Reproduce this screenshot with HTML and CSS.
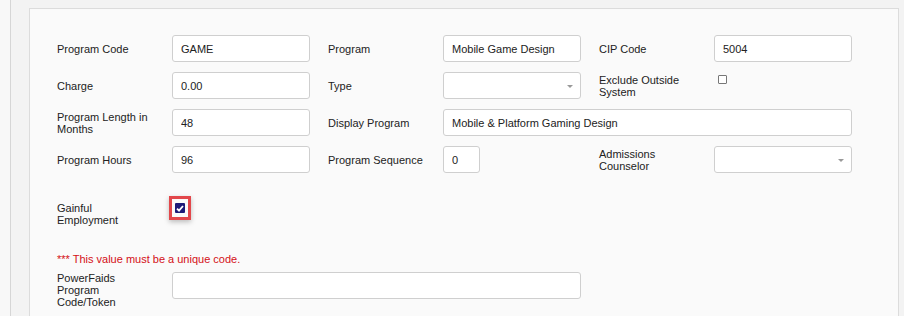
FILE: index.html
```html
<!DOCTYPE html>
<html lang="en">
<head>
    <meta charset="UTF-8">
    <meta name="viewport" content="width=device-width, initial-scale=1.0">
    <title>Program</title>
    <link rel="stylesheet" href="styles.css">
</head>
<body>
    <div class="wrap">
        <div class="panel">
            <div class="form-grid">
                <div class="field">
                    <label for="code">Program Code</label>
                    <input id="code" type="text" value="GAME">
                </div>
                <div class="field">
                    <label for="program">Program</label>
                    <input id="program" type="text" value="Mobile Game Design">
                </div>
                <div class="field">
                    <label for="cip">CIP Code</label>
                    <input id="cip" type="text" value="5004">
                </div>

                <div class="field">
                    <label for="charge">Charge</label>
                    <input id="charge" type="text" value="0.00">
                </div>
                <div class="field">
                    <label for="type">Type</label>
                    <div class="select" id="type"><span class="caret"></span></div>
                </div>
                <div class="field">
                    <label for="exclude">Exclude Outside System</label>
                    <input id="exclude" class="check" type="checkbox">
                </div>

                <div class="field">
                    <label for="length">Program Length in Months</label>
                    <input id="length" type="text" value="48">
                </div>
                <div class="field span-2">
                    <label for="display">Display Program</label>
                    <input id="display" type="text" value="Mobile &amp; Platform Gaming Design">
                </div>

                <div class="field">
                    <label for="hours">Program Hours</label>
                    <input id="hours" type="text" value="96">
                </div>
                <div class="field">
                    <label for="sequence">Program Sequence</label>
                    <input id="sequence" class="short" type="text" value="0">
                </div>
                <div class="field">
                    <label for="counselor">Admissions Counselor</label>
                    <div class="select" id="counselor"><span class="caret"></span></div>
                </div>
            </div>

            <div class="gainful">
                <label>Gainful Employment</label>
                <span class="highlight">
                    <span class="checked">
                        <svg width="8" height="7" viewBox="0 0 8 7"><path d="M1 3.6 L3 5.6 L7 1" fill="none" stroke="#fff" stroke-width="1.8"/></svg>
                    </span>
                </span>
            </div>

            <p class="warning">*** This value must be a unique code.</p>

            <div class="field wide">
                <label for="token">PowerFaids Program Code/Token</label>
                <input id="token" type="text" value="">
            </div>
        </div>
    </div>
</body>
</html>
```

FILE: styles.css
```css
body {
    margin: 0;
    background-color: #f8f8f8;
    font-family: "Liberation Sans", Arial, sans-serif;
    font-size: 11px;
    color: #222;
}
.wrap {
    margin-left: 10px;
    width: 870px;
    padding: 8px 18px 0 18px;
    background-color: #f3f3f3;
    border-left: 1px solid #d6d6d6;
    border-right: 1px solid #d6d6d6;
}
.panel {
    background-color: #fafafa;
    border: 1px solid #dcdcdc;
    padding: 26px 27px 40px 27px;
    height: 320px;
}
.form-grid {
    display: grid;
    grid-template-columns: repeat(3, 253px);
    column-gap: 18px;
    row-gap: 10px;
}
.field {
    display: flex;
    align-items: center;
    min-height: 27px;
}
.field label {
    width: 97px;
    margin-right: 18px;
    padding-top: 1px;
    flex-shrink: 0;
}
.field.span-2 {
    grid-column: span 2;
}
input[type="text"], .select {
    flex: 1;
    min-width: 0;
    width: 0;
    box-sizing: border-box;
    height: 27px;
    margin: 0;
    padding: 0 8px;
    border: 1px solid #cfcfcf;
    border-radius: 3px;
    background: #fff;
    font-family: inherit;
    font-size: 11px;
    color: #222;
}
input.short {
    flex: none;
    width: 37px;
}
.select {
    position: relative;
}
.caret {
    position: absolute;
    right: 7px;
    top: 12px;
    border-style: solid;
    border-width: 3px 3px 0 3px;
    border-color: #999 transparent transparent transparent;
}
.check {
    appearance: none;
    align-self: flex-start;
    width: 9px;
    height: 9px;
    margin: 3px 0 0 4px;
    border: 1px solid #777;
    border-radius: 1px;
    background: #fff;
}
.gainful {
    display: flex;
    align-items: flex-start;
    margin-top: 23px;
}
.gainful label {
    width: 97px;
    margin: 6px 15px 0 0;
}
.highlight {
    display: inline-block;
    border: 3px solid #e2474b;
    padding: 4px 3px;
    box-shadow: 0 2px 5px rgba(0, 0, 0, 0.25);
}
.checked {
    display: flex;
    align-items: center;
    justify-content: center;
    width: 10px;
    height: 10px;
    background-color: #1c1a78;
    border-radius: 1px;
}
.warning {
    margin: 27px 0 7px 0;
    color: #d40f16;
}
.field.wide {
    align-items: flex-start;
    width: 524px;
}
.field.wide label {
    padding-top: 0;
}
```
